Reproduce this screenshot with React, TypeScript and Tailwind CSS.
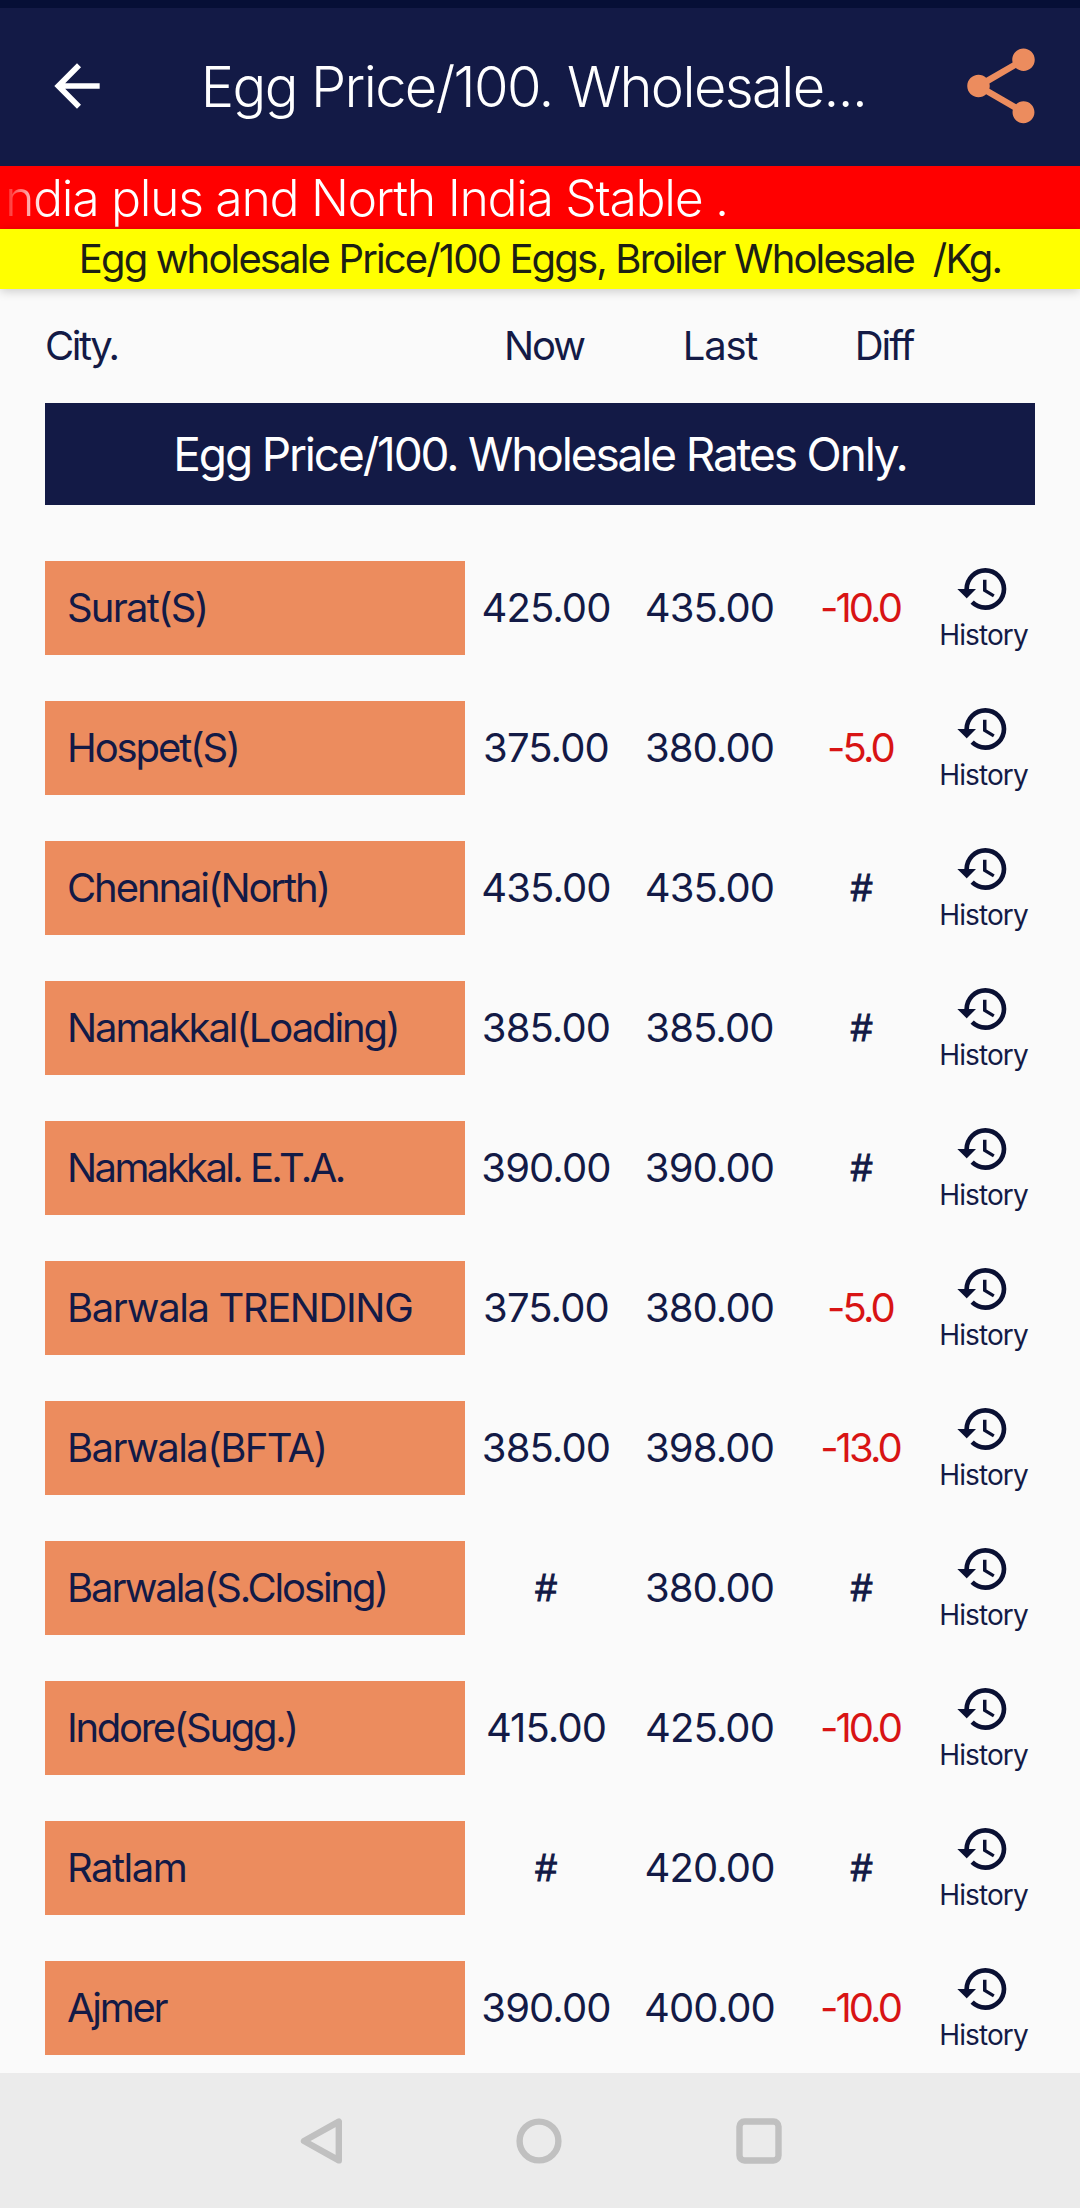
import { clsx } from "clsx";
import { MdArrowBack, MdHistory, MdShare } from "react-icons/md";

type Rate = { city: string; now: string; last: string; diff: string; spacing?: string };

const rates: Rate[] = [
    { city: "Surat(S)", now: "425.00", last: "435.00", diff: "-10.0", spacing: "tracking-[-1.8px]" },
    { city: "Hospet(S)", now: "375.00", last: "380.00", diff: "-5.0" },
    { city: "Chennai(North)", now: "435.00", last: "435.00", diff: "#" },
    { city: "Namakkal(Loading)", now: "385.00", last: "385.00", diff: "#" },
    { city: "Namakkal. E.T.A.", now: "390.00", last: "390.00", diff: "#", spacing: "tracking-[-2.6px]" },
    { city: "Barwala TRENDING", now: "375.00", last: "380.00", diff: "-5.0", spacing: "tracking-[-1.4px]" },
    { city: "Barwala(BFTA)", now: "385.00", last: "398.00", diff: "-13.0", spacing: "tracking-[-1.6px]" },
    { city: "Barwala(S.Closing)", now: "#", last: "380.00", diff: "#" },
    { city: "Indore(Sugg.)", now: "415.00", last: "425.00", diff: "-10.0", spacing: "tracking-[-2.3px]" },
    { city: "Ratlam", now: "#", last: "420.00", diff: "#", spacing: "tracking-[-1.5px]" },
    { city: "Ajmer", now: "390.00", last: "400.00", diff: "-10.0", spacing: "tracking-[-2.3px]" },
];

function Header() {
    return (
        <header className="flex h-[158px] items-center justify-between bg-[#131a46] pb-[2px] pl-[43px] pr-[34px] text-white">
            <MdArrowBack className="size-[68px]" />
            <h1 className="pt-[2px] text-[56px] font-light leading-none tracking-[-1.6px]">Egg Price/100. Wholesale...</h1>
            <MdShare className="size-[90px] text-[#ec8c5e]" />
        </header>
    );
}

// "#" stands for a rate that is missing or unchanged
function Value({ text }: { text: string }) {
    return (
        <span
            className={clsx(
                "leading-[94px]",
                text === "#" && "font-['Liberation_Sans'] text-[38px] [-webkit-text-stroke:1.2px_#131a46]",
                text.startsWith("-") && "pr-[3px] tracking-[-2.9px] text-[#d81414]",
                text !== "#" && !text.startsWith("-") && "tracking-[-0.9px]"
            )}
        >
            {text}
        </span>
    );
}

function RateRow({ rate }: { rate: Rate }) {
    return (
        <li className="grid h-[140px] grid-cols-[420px_162px_165px_139px_104px] items-start text-center text-[40px]">
            <span className={clsx("flex h-[94px] items-center bg-[#ec8c5e] pl-[22px]", rate.spacing ?? "tracking-[-2.1px]")}>
                {rate.city}
            </span>
            <Value text={rate.now} />
            <Value text={rate.last} />
            <Value text={rate.diff} />
            <button className="flex flex-col items-center">
                <MdHistory className="size-[56px] text-[#0a1033]" />
                <span className="pl-px text-[28px] leading-[36px] tracking-[-0.9px]">History</span>
            </button>
        </li>
    );
}

function NavBar() {
    return (
        <nav className="flex h-[135px] items-center justify-center bg-[#ebebeb] pl-[2px]">
            <svg viewBox="0 0 482 46" className="h-[46px] w-[482px]" fill="none" stroke="#c0c0c0" strokeWidth="6.4" strokeLinejoin="round">
                <path d="M38.8 3.6v38.8L4 23z" />
                <circle cx="239" cy="23" r="19.4" />
                <rect x="439.5" y="3.5" width="39" height="39" rx="5" />
            </svg>
        </nav>
    );
}

export default function App() {
    return (
        <div className="flex h-[2208px] w-[1080px] flex-col overflow-hidden bg-[#fafafa] font-['Inter','Liberation_Sans',sans-serif] text-[#131a46]">
            <div className="h-2 shrink-0 bg-[#060f36]" />
            <Header />

            {/* ticker, its left edge fades out */}
            <div className="h-[63px] bg-[#ff0000]">
                <p className="whitespace-pre bg-linear-to-r from-white/20 from-[8px] to-white to-[44px] bg-clip-text pl-[5px] text-[50px] font-light leading-[64px] tracking-[-1.35px] text-transparent">
                    ndia plus and North India Stable .
                </p>
            </div>
            <p className="h-[60px] whitespace-pre bg-[#ffff00] text-center text-[40px] leading-[60px] tracking-[-1.85px] text-[#1c2014] shadow-[0_2px_10px_rgba(0,0,0,0.2)]">
                Egg wholesale Price/100 Eggs, Broiler Wholesale  /Kg.
            </p>

            <main className="min-h-0 flex-1 overflow-hidden px-[45px]">
                <div className="grid h-[114px] grid-cols-[420px_158px_194px_134px] text-center text-[40px] leading-[114px] tracking-[-2px]">
                    <span className="text-left tracking-[-2.5px]">City.</span>
                    <span>Now</span>
                    <span className="tracking-[-1.2px]">Last</span>
                    <span>Diff</span>
                </div>
                <h2 className="h-[102px] bg-[#131a46] text-center text-[46px] leading-[102px] tracking-[-2.15px] text-white">
                    Egg Price/100. Wholesale Rates Only.
                </h2>
                <ul className="w-[990px] pt-[56px]">
                    {rates.map((rate) => (
                        <RateRow key={rate.city} rate={rate} />
                    ))}
                </ul>
            </main>

            <NavBar />
        </div>
    );
}
